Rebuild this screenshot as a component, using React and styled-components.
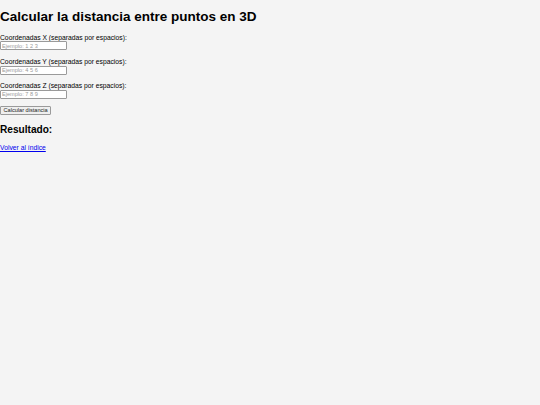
import styled, { createGlobalStyle } from "styled-components"

const GlobalStyle = createGlobalStyle`
  html, body {
    margin: 0;
    padding: 0;
    background-color: #f4f4f4;
  }
  body {
    font-family: "Liberation Sans", Arial, sans-serif;
    font-size: 6.75px;
    color: #000;
    -webkit-font-smoothing: antialiased;
  }
`

const Page = styled.main`
  display: flex;
  flex-direction: column;
  align-items: flex-start;
`

const Title = styled.h1`
  font-size: 13.5px;
  font-weight: 700;
  margin: 9px 0;
  line-height: 15.5px;
`

const Form = styled.form`
  display: flex;
  flex-direction: column;
  align-items: flex-start;
`

const Field = styled.div`
  display: flex;
  flex-direction: column;
  align-items: flex-start;
  margin-bottom: 7.3px;
`

const Label = styled.label`
  line-height: 7.75px;
  margin-bottom: 0.2px;
`

const Input = styled.input`
  box-sizing: border-box;
  width: 67px;
  height: 9px;
  padding: 0 1px;
  font-family: "Liberation Sans", Arial, sans-serif;
  font-size: 5.6px;
  border: 0.5px solid #9a9a9a;
  border-radius: 1px;
  background: #fff;
  outline: none;

  &::placeholder {
    color: #9a9a9a;
  }
`

const Button = styled.button`
  box-sizing: border-box;
  height: 8.8px;
  padding: 0 2.5px;
  font-family: "Liberation Sans", Arial, sans-serif;
  font-size: 5.6px;
  line-height: 1;
  color: #222;
  background: #efefef;
  border: 0.5px solid #9a9a9a;
  border-radius: 1px;
`

const Subtitle = styled.h2`
  font-size: 10.125px;
  font-weight: 700;
  line-height: 11.6px;
  margin: 8.6px 0 8.6px;
`

const Result = styled.div``

const Link = styled.a`
  color: #0000ee;
  text-decoration: underline;
  line-height: 7.75px;
`

const fields = [
  { id: "x", axis: "X", placeholder: "Ejemplo: 1 2 3" },
  { id: "y", axis: "Y", placeholder: "Ejemplo: 4 5 6" },
  { id: "z", axis: "Z", placeholder: "Ejemplo: 7 8 9" },
]

export default function App() {
  return (
    <>
      <GlobalStyle />
      <Page>
        <Title>Calcular la distancia entre puntos en 3D</Title>
        <Form onSubmit={(e) => e.preventDefault()}>
          {fields.map((f) => (
            <Field key={f.id}>
              <Label htmlFor={f.id}>
                Coordenadas {f.axis} (separadas por espacios):
              </Label>
              <Input id={f.id} type="text" placeholder={f.placeholder} />
            </Field>
          ))}
          <Button type="submit">Calcular distancia</Button>
        </Form>
        <Subtitle>Resultado:</Subtitle>
        <Result />
        <Link href="#">Volver al índice</Link>
      </Page>
    </>
  )
}
